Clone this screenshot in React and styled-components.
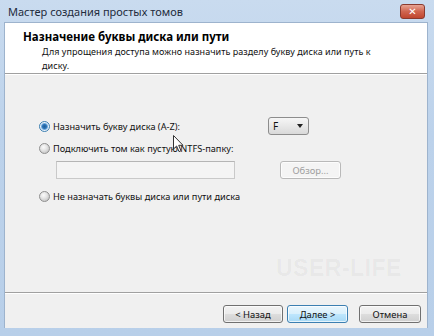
import React from 'react';
import styled, { createGlobalStyle } from 'styled-components';

const GlobalStyle = createGlobalStyle`
  html, body {
    margin: 0;
    padding: 0;
    background: #bdd3ec;
  }
  body {
    font-family: "Noto Sans", "DejaVu Sans", sans-serif;
  }
`;

const Window = styled.div`
  position: relative;
  width: 434px;
  height: 336px;
  box-sizing: border-box;
  display: flex;
  flex-direction: column;
  padding: 0 6px 8px 4px;
  background: linear-gradient(180deg, #c9dbef 0%, #bcd2eb 40%, #b8cfe9 100%);
  overflow: hidden;
`;

const TitleBar = styled.div`
  height: 22px;
  display: flex;
  align-items: center;
  justify-content: space-between;
  padding: 0 3px 0 4px;
  font-size: 11px;
  color: #1e2b3c;
`;

const CloseButton = styled.div`
  width: 23px;
  height: 13px;
  margin-top: 1px;
  border-radius: 3px;
  border: 1px solid #8a3a2e;
  background: linear-gradient(180deg, #e8a493 0%, #d0654f 50%, #c0462f 100%);
  display: flex;
  align-items: center;
  justify-content: center;
  color: #fff;
  font-family: "DejaVu Sans", sans-serif;
  font-weight: bold;
  font-size: 10px;
  line-height: 1;
`;

const Client = styled.div`
  flex: 1;
  display: flex;
  flex-direction: column;
  border: 1px solid #9db3cd;
  border-bottom: none;
`;

const Header = styled.div`
  height: 51px;
  background: #fff;
  border-bottom: 1px solid #a0a0a0;
  padding: 6px 0 0 18px;
  box-sizing: border-box;
`;

const HeaderTitle = styled.div`
  font-weight: bold;
  font-size: 11.5px;
  color: #000;
  line-height: 15px;
`;

const HeaderText = styled.div`
  margin: 1px 0 0 19px;
  font-size: 9px;
  letter-spacing: 0.05px;
  line-height: 14px;
  color: #111;
  width: 345px;
`;

const Body = styled.div`
  flex: 1;
  background: #f0f0f0;
  border-top: 1px solid #fff;
  padding: 42px 0 0 34px;
  display: flex;
  flex-direction: column;
`;

const Row = styled.div`
  display: flex;
  align-items: center;
  width: ${p => p.$width || 'auto'};
  justify-content: space-between;
  height: ${p => p.$height || 14}px;
  margin-top: ${p => p.$top || 0}px;
  padding-left: ${p => p.$indent || 0}px;
`;

const Option = styled.label`
  display: flex;
  align-items: center;
  gap: 3px;
  font-size: 9.2px;
  color: #111;
`;

const Radio = styled.span`
  width: 11px;
  height: 11px;
  border-radius: 50%;
  box-sizing: border-box;
  border: 1px solid ${p => (p.$checked ? '#3c7fb1' : '#8f8f8f')};
  background: ${p =>
    p.$checked
      ? 'radial-gradient(circle at 50% 50%, #1f5f99 0, #2c73b5 2px, #6fa9dc 3px, #e9f2fb 4px)'
      : 'radial-gradient(circle at 40% 35%, #fbfbfb 0, #e6e6e6 3px, #c9c9c9 6px)'};
`;

const Select = styled.div`
  width: 41px;
  height: 18px;
  box-sizing: border-box;
  border: 1px solid #8d8d8d;
  border-radius: 3px;
  background: linear-gradient(180deg, #f6f6f6 0%, #e8e8e8 50%, #d9d9d9 100%);
  display: flex;
  align-items: center;
  justify-content: space-between;
  padding: 0 5px 0 4px;
  font-size: 10px;
  color: #111;
`;

const Arrow = styled.span`
  width: 0;
  height: 0;
  border-left: 3.5px solid transparent;
  border-right: 3.5px solid transparent;
  border-top: 4px solid #222;
`;

const Field = styled.div`
  width: 179px;
  height: 18px;
  box-sizing: border-box;
  border: 1px solid #c9c9c9;
  border-top-color: #b5b5b5;
  background: #f4f4f4;
`;

const Button = styled.div`
  width: ${p => p.$width || 60}px;
  height: 18px;
  box-sizing: border-box;
  border-radius: 3px;
  border: 1px solid ${p => (p.$focused ? '#3c7fb1' : p.$disabled ? '#b9b9b9' : '#707070')};
  background: ${p =>
    p.$focused
      ? 'linear-gradient(180deg, #eaf6fd 0%, #d9f0fc 50%, #bee6fd 51%, #a7d9f5 100%)'
      : p.$disabled
      ? '#f4f4f4'
      : 'linear-gradient(180deg, #f2f2f2 0%, #ebebeb 50%, #dddddd 51%, #cfcfcf 100%)'};
  box-shadow: inset 0 0 0 1px rgba(255, 255, 255, 0.7);
  display: flex;
  align-items: center;
  justify-content: center;
  font-size: 9.4px;
  color: ${p => (p.$disabled ? '#a0a0a0' : '#111')};
`;

const Footer = styled.div`
  height: 36px;
  background: #f0f0f0;
  border-top: 1px solid #a0a0a0;
  box-shadow: inset 0 1px 0 #fff;
  display: flex;
  align-items: flex-start;
  justify-content: flex-end;
  padding: 12px 6px 0 0;
  box-sizing: border-box;
`;

const ButtonGap = styled.span`
  width: ${p => p.$w}px;
`;

const Watermark = styled.div`
  position: absolute;
  left: 276px;
  top: 255px;
  font-family: "Liberation Sans", Arial, sans-serif;
  font-weight: bold;
  font-size: 23px;
  letter-spacing: 0.5px;
  color: rgba(0, 0, 0, 0.045);
  pointer-events: none;
`;

const Cursor = styled.svg`
  position: absolute;
  left: 173px;
  top: 135px;
`;

export default function App() {
  return (
    <>
      <GlobalStyle />
      <Window>
        <TitleBar>
          <span>Мастер создания простых томов</span>
          <CloseButton>✕</CloseButton>
        </TitleBar>
        <Client>
          <Header>
            <HeaderTitle>Назначение буквы диска или пути</HeaderTitle>
            <HeaderText>
              Для упрощения доступа можно назначить разделу букву диска или путь к диску.
            </HeaderText>
          </Header>
          <Body>
            <Row $width="270px" $height={18}>
              <Option>
                <Radio $checked />
                Назначить букву диска (A-Z):
              </Option>
              <Select>
                F
                <Arrow />
              </Select>
            </Row>
            <Row $top={6}>
              <Option>
                <Radio />
                Подключить том как пустую NTFS-папку:
              </Option>
            </Row>
            <Row $height={18} $top={6} $indent={17} $width="285px">
              <Field />
              <Button $disabled $width={61}>Обзор...</Button>
            </Row>
            <Row $top={10}>
              <Option>
                <Radio />
                Не назначать буквы диска или пути диска
              </Option>
            </Row>
          </Body>
          <Footer>
            <Button>&lt; Назад</Button>
            <ButtonGap $w={4} />
            <Button $focused $width={61}>Далее &gt;</Button>
            <ButtonGap $w={11} />
            <Button $width={62}>Отмена</Button>
          </Footer>
        </Client>
        <Watermark>USER-LIFE</Watermark>
        <Cursor width="12" height="18" viewBox="0 0 12 18">
          <path
            d="M0.5 0.5 L0.5 14 L3.6 11 L6 16.6 L8 15.7 L5.7 10.3 L10 10.3 Z"
            fill="#fff"
            stroke="#333"
            strokeWidth="1"
            strokeLinejoin="round"
          />
        </Cursor>
      </Window>
    </>
  );
}
